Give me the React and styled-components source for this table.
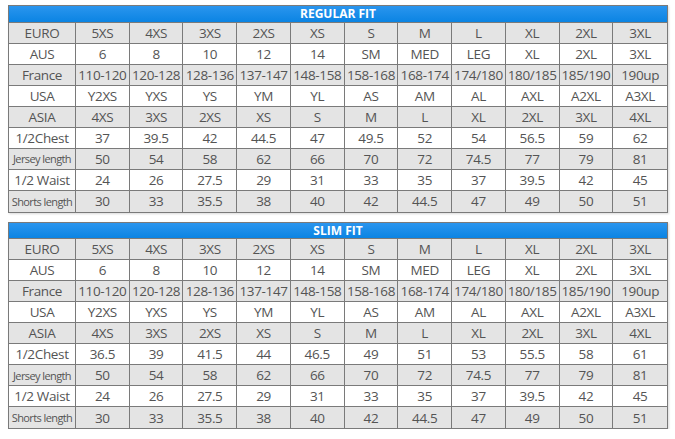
import React from 'react';
import styled, { createGlobalStyle } from 'styled-components';

const GlobalStyle = createGlobalStyle`
    *, *::before, *::after {
        box-sizing: border-box;
    }

    html, body {
        margin: 0;
        padding: 0;
        background: #fff;
    }
`;

const Page = styled.div`
    display: flex;
    flex-direction: column;
    gap: 9px;
    padding: 5px 0 0 8px;
    width: 668px;
    font-family: 'Open Sans', 'Liberation Sans', sans-serif;
`;

const Chart = styled.div`
    border: 1.5px solid #7a7a7a;
    box-shadow: 1px 1px 2px rgba(0, 0, 0, 0.15);
`;

const TitleBar = styled.div`
    height: 16.5px;
    line-height: 15px;
    background: linear-gradient(#2a95ee, #0b84e3);
    color: #fff;
    font-weight: 700;
    font-size: 12px;
    text-align: center;
    border-bottom: 1.5px solid #7a7a7a;
`;

const Row = styled.div`
    display: grid;
    grid-template-columns: 67px repeat(11, 1fr);
    height: 21px;
    background: ${props => (props.shaded ? '#e4e4e4' : '#fff')};
    border-bottom: 1.5px solid #7a7a7a;

    &:last-child {
        border-bottom: none;
    }
`;

const Cell = styled.div`
    display: flex;
    align-items: center;
    justify-content: center;
    white-space: nowrap;
    overflow: hidden;
    color: #545454;
    font-size: ${props => (props.tight ? '11px' : '13.5px')};
    letter-spacing: ${props => (props.tight ? '-0.6px' : '-0.35px')};
    border-right: 1.5px solid #7a7a7a;

    &:last-child {
        border-right: none;
    }
`;

const common = [
    ['EURO', '5XS', '4XS', '3XS', '2XS', 'XS', 'S', 'M', 'L', 'XL', '2XL', '3XL'],
    ['AUS', '6', '8', '10', '12', '14', 'SM', 'MED', 'LEG', 'XL', '2XL', '3XL'],
    ['France', '110-120', '120-128', '128-136', '137-147', '148-158', '158-168', '168-174', '174/180', '180/185', '185/190', '190up'],
    ['USA', 'Y2XS', 'YXS', 'YS', 'YM', 'YL', 'AS', 'AM', 'AL', 'AXL', 'A2XL', 'A3XL'],
    ['ASIA', '4XS', '3XS', '2XS', 'XS', 'S', 'M', 'L', 'XL', '2XL', '3XL', '4XL']
];

const regular = [
    ...common,
    ['1/2Chest', '37', '39.5', '42', '44.5', '47', '49.5', '52', '54', '56.5', '59', '62'],
    ['Jersey length', '50', '54', '58', '62', '66', '70', '72', '74.5', '77', '79', '81'],
    ['1/2 Waist', '24', '26', '27.5', '29', '31', '33', '35', '37', '39.5', '42', '45'],
    ['Shorts length', '30', '33', '35.5', '38', '40', '42', '44.5', '47', '49', '50', '51']
];

const slim = [
    ...common,
    ['1/2Chest', '36.5', '39', '41.5', '44', '46.5', '49', '51', '53', '55.5', '58', '61'],
    ['Jersey length', '50', '54', '58', '62', '66', '70', '72', '74.5', '77', '79', '81'],
    ['1/2 Waist', '24', '26', '27.5', '29', '31', '33', '35', '37', '39.5', '42', '45'],
    ['Shorts length', '30', '33', '35.5', '38', '40', '42', '44.5', '47', '49', '50', '51']
];

const SizeChart = ({ title, rows }) => (
    <Chart>
        <TitleBar>{title}</TitleBar>
        {rows.map((row, index) => (
            <Row key={row[0]} shaded={index % 2 === 0}>
                {row.map((value, col) => (
                    <Cell key={col} tight={col === 0 && value.length > 10}>
                        {value}
                    </Cell>
                ))}
            </Row>
        ))}
    </Chart>
);

const App = () => (
    <Page>
        <GlobalStyle />
        <SizeChart title="REGULAR FIT" rows={regular} />
        <SizeChart title="SLIM FIT" rows={slim} />
    </Page>
);

export default App;
